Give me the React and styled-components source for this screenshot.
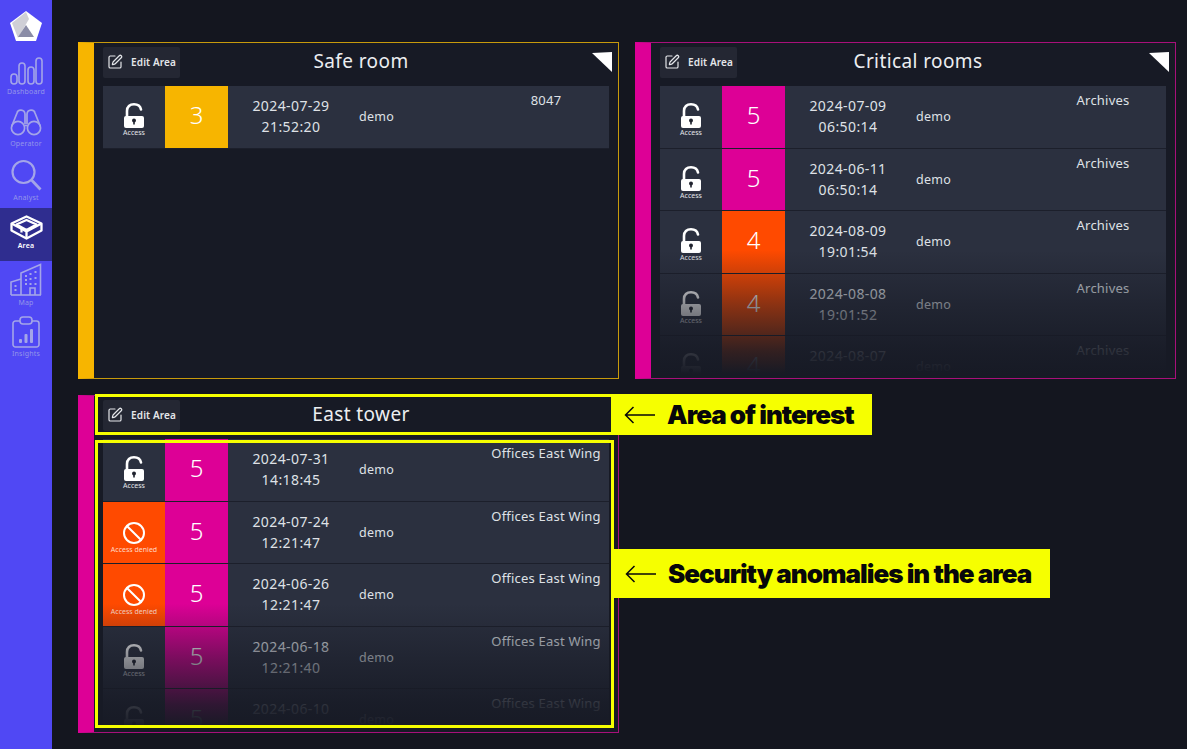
import React from "react";
import styled, { createGlobalStyle } from "styled-components";
import { SquarePen, Ban } from "lucide-react";

const GlobalStyle = createGlobalStyle`
  html, body {
    margin: 0;
    padding: 0;
    background: #14161f;
    font-family: "Noto Sans", "Liberation Sans", sans-serif;
  }
  * {
    box-sizing: border-box;
  }
`;

const Page = styled.div`
  display: flex;
  width: 1187px;
  height: 749px;
  overflow: hidden;
  background: #14161f;
`;

const Sidebar = styled.nav`
  width: 52px;
  flex-shrink: 0;
  background: #5048f4;
  display: flex;
  flex-direction: column;
`;

const LogoBox = styled.div`
  height: 49px;
  display: flex;
  align-items: flex-start;
  justify-content: center;
  padding-top: 10px;
`;

const NavItem = styled.div`
  height: 53px;
  display: flex;
  flex-direction: column;
  align-items: center;
  background: ${(p) => (p.$active ? "#2f2d8f" : "transparent")};
  color: ${(p) => (p.$active ? "#ffffff" : "#a4a5e8")};
`;

const NavIcon = styled.div`
  height: 36px;
  margin-top: ${(p) => p.$top}px;
  display: flex;
  align-items: center;
  justify-content: center;
`;

const NavLabel = styled.span`
  margin-top: ${(p) => p.$gap}px;
  font-size: 7px;
  line-height: 8px;
  letter-spacing: 0.2px;
  font-weight: ${(p) => (p.$active ? 600 : 400)};
  color: ${(p) => (p.$active ? "#ffffff" : "#9496ea")};
`;

const Main = styled.main`
  flex: 1;
  padding: 42px 0 0 26px;
  display: grid;
  grid-template-columns: 541px 541px;
  grid-template-rows: 337px 338px;
  gap: 16px;
`;

const Panel = styled.section`
  position: relative;
  display: flex;
  flex-direction: column;
  padding: 3px 9px 4px 9px;
  background: #171a25;
  border: 1px solid ${(p) => p.$edge};
  border-left: 16px solid ${(p) => p.$accent};
`;

const PanelHeader = styled.header`
  display: grid;
  grid-template-columns: 77px 1fr 67px;
  align-items: center;
  height: 32px;
  margin-bottom: 8px;
  flex-shrink: 0;
`;

const EditButton = styled.div`
  height: 31px;
  display: flex;
  align-items: center;
  justify-content: center;
  gap: 8px;
  background: #242733;
  border-radius: 2px;
  color: #e4e6ea;
  font-size: 10px;
  font-weight: 600;
  letter-spacing: 0.1px;
`;

const PanelTitle = styled.h2`
  margin: 0 0 2px;
  text-align: center;
  color: #eceef1;
  font-size: 19px;
  line-height: 24px;
  font-weight: 400;
  letter-spacing: 0.4px;
`;

const Corner = styled.svg`
  justify-self: end;
  margin-right: -4px;
`;

const RowList = styled.div`
  position: relative;
  flex: 1;
  overflow: hidden;
`;

const Fade = styled.div`
  position: absolute;
  inset: 0;
  background: linear-gradient(
    to bottom,
    rgba(23, 26, 37, 0) 57%,
    rgba(23, 26, 37, 0.5) 76%,
    rgba(23, 26, 37, 0.88) 92%,
    #171a25 100%
  );
`;

const Row = styled.div`
  display: grid;
  grid-template-columns: 62px 63px 126px 129px 126px;
  height: 62.5px;
  background: #2b303f;
  border-bottom: 1px solid #1c1f2b;
  color: #dfe1e6;
`;

const AccessCell = styled.div`
  display: flex;
  flex-direction: column;
  align-items: center;
  padding-top: ${(p) => (p.$denied ? 19 : 17)}px;
  background: ${(p) => (p.$denied ? "#ff4a00" : "transparent")};
  color: #ffffff;
`;

const AccessLabel = styled.span`
  font-size: 7px;
  line-height: 9px;
  color: ${(p) => (p.$denied ? "#ffd9c7" : "#e4e6ea")};
`;

const LevelCell = styled.div`
  display: flex;
  align-items: center;
  justify-content: center;
  padding-bottom: 4px;
  background: ${(p) => p.$color};
  color: #ffffff;
  font-size: 24px;
  font-weight: 300;
`;

const DateCell = styled.div`
  display: flex;
  flex-direction: column;
  align-items: center;
  justify-content: center;
  padding-bottom: 1px;
  font-size: 14px;
  line-height: 21px;
  letter-spacing: 0.4px;
`;

const UserCell = styled.div`
  display: flex;
  align-items: center;
  padding-left: 5px;
  font-size: 12.5px;
  letter-spacing: 0.3px;
`;

const LocationCell = styled.div`
  padding-top: 4px;
  text-align: center;
  font-size: 13px;
  line-height: 20px;
  letter-spacing: 0.2px;
  white-space: nowrap;
`;

const Frame = styled.div`
  position: absolute;
  left: 1px;
  width: 519px;
  top: ${(p) => p.$top}px;
  height: ${(p) => p.$height}px;
  border: 3px solid #f6ff00;
  pointer-events: none;
`;

const Callout = styled.div`
  position: absolute;
  left: ${(p) => p.$left}px;
  top: ${(p) => p.$top}px;
  height: ${(p) => p.$height}px;
  width: ${(p) => p.$width}px;
  display: flex;
  align-items: center;
  gap: 12px;
  padding-left: 12px;
  background: #f6ff00;
  color: #07070a;
  font-family: Inter, "Liberation Sans", sans-serif;
  font-size: 26px;
  font-weight: 900;
  letter-spacing: -1px;
  white-space: nowrap;
`;

const LockOpen = () => (
  <svg width="24" height="25" viewBox="0 0 24 25">
    <path
      d="M5 14V8C5 3.600 7.800 1.300 12 1.300c3.800 0 6.300 1.800 7 5.200"
      fill="none"
      stroke="currentColor"
      strokeWidth="2.600"
      strokeLinecap="round"
    />
    <rect x="2" y="13" width="20" height="12" rx="2" fill="currentColor" />
    <circle cx="12" cy="17.500" r="2" fill="#20232f" />
    <rect x="11.200" y="17.500" width="1.600" height="4" fill="#20232f" />
  </svg>
);

const Logo = () => (
  <svg width="34" height="33" viewBox="0 0 34 33">
    <polygon points="17,1 33,13 27,31 7,31 1,13" fill="#ffffff" />
    <polygon points="3,13 17,2 20,9 9,28" fill="#cfcfd6" />
    <polygon points="17,15 9,27 25,27" fill="#8a8ca6" />
  </svg>
);

const DashboardIcon = () => (
  <svg width="33" height="28" viewBox="0 0 33 28" fill="none" stroke="currentColor" strokeWidth="1.600">
    <rect x="1" y="17" width="6" height="10" rx="3" />
    <rect x="9" y="6" width="6" height="21" rx="3" />
    <rect x="18" y="10" width="6" height="17" rx="3" />
    <rect x="26" y="1" width="6" height="26" rx="3" />
  </svg>
);

const BinocularsIcon = () => (
  <svg width="32" height="28" viewBox="0 0 32 28" fill="none" stroke="currentColor" strokeWidth="1.700">
    <circle cx="8" cy="20" r="6.600" />
    <circle cx="24" cy="20" r="6.600" />
    <path d="M1.600 18.500 7 5c.8-4 7.500-4 8 1v10" />
    <path d="M30.400 18.500 25 5c-.8-4-7.500-4-8 1v10" />
    <path d="M14.500 17.500h3" />
  </svg>
);

const SearchIcon = () => (
  <svg width="32" height="32" viewBox="0 0 32 32" fill="none" stroke="currentColor" strokeWidth="2.200">
    <circle cx="13.500" cy="13" r="11" />
    <path d="M21.500 21 30.500 30.500" strokeWidth="2.800" />
  </svg>
);

const AreaIcon = () => (
  <svg width="33" height="25" viewBox="0 0 33 25" fill="none" stroke="currentColor" strokeWidth="2.300" strokeLinejoin="round">
    <path d="M16.500 1.500 31.500 8.500V15.500L16.500 23.500 1.500 15.500V8.500Z" />
    <path d="M16.500 5 26.500 9.500 16.500 15 6.500 9.500Z" />
    <path d="M1.500 8.500 16.500 16.500 31.500 8.500M16.500 16.500v7" />
    <path d="M11.500 12.500v5" />
  </svg>
);

const MapIcon = () => (
  <svg width="32" height="33" viewBox="0 0 32 33" fill="none" stroke="currentColor" strokeWidth="1.600">
    <path d="M11 32V10L30.500 1.500V32" />
    <path d="M1 32V19L11 16" />
    <path d="M1 32h30" />
    <path d="M20 32v-7h5v7" />
    <path
      d="M15 13h2M19.500 11h2M24.500 9h2M15 17h2M19.500 16h2M24.500 15h2M15 21h2M19.500 21h2M24.500 21h2M4.500 23h2M4.500 27h2"
      strokeWidth="1.800"
    />
  </svg>
);

const InsightsIcon = () => (
  <svg width="28" height="32" viewBox="0 0 28 32" fill="none" stroke="currentColor" strokeWidth="1.600">
    <path d="M8 5H3.500A2.500 2.500 0 0 0 1 7.500v21A2.500 2.500 0 0 0 3.500 31h21a2.500 2.500 0 0 0 2.500-2.500v-21A2.500 2.500 0 0 0 24.500 5H20" />
    <rect x="8" y="1" width="12" height="7" rx="3" />
    <rect x="7" y="23" width="3" height="4" rx="1" fill="currentColor" stroke="none" />
    <rect x="12.500" y="18" width="3" height="9" rx="1" fill="currentColor" stroke="none" />
    <rect x="18" y="13" width="3" height="14" rx="1" fill="currentColor" stroke="none" />
  </svg>
);

const ArrowLeft = () => (
  <svg width="31" height="18" viewBox="0 0 31 18" fill="none" stroke="#07070a" strokeWidth="1.500">
    <path d="M31 9H1.500M9.500 1 1.500 9l8 8" />
  </svg>
);

// icon and label offsets differ a little per item in the source design
const navItems = [
  { label: "Dashboard", icon: <DashboardIcon />, top: 4, gap: -1 },
  { label: "Operator", icon: <BinocularsIcon />, top: 2, gap: 0 },
  { label: "Analyst", icon: <SearchIcon />, top: 2, gap: 1 },
  { label: "Area", icon: <AreaIcon />, top: 1, gap: -3, active: true },
  { label: "Map", icon: <MapIcon />, top: 0, gap: 2 },
  { label: "Insights", icon: <InsightsIcon />, top: 0, gap: 0 },
];

const PINK = "#dd0096";
const ORANGE = "#ff4a00";
const AMBER = "#f7b500";

const safeRows = [{ level: 3, color: AMBER, date: "2024-07-29", time: "21:52:20", place: "8047" }];

const criticalRows = [
  { level: 5, color: PINK, date: "2024-07-09", time: "06:50:14", place: "Archives" },
  { level: 5, color: PINK, date: "2024-06-11", time: "06:50:14", place: "Archives" },
  { level: 4, color: ORANGE, date: "2024-08-09", time: "19:01:54", place: "Archives" },
  { level: 4, color: ORANGE, date: "2024-08-08", time: "19:01:52", place: "Archives" },
  { level: 4, color: ORANGE, date: "2024-08-07", time: "19:01:50", place: "Archives" },
];

const eastRows = [
  { level: 5, color: PINK, date: "2024-07-31", time: "14:18:45", place: "Offices East Wing" },
  { level: 5, color: PINK, date: "2024-07-24", time: "12:21:47", place: "Offices East Wing", denied: true },
  { level: 5, color: PINK, date: "2024-06-26", time: "12:21:47", place: "Offices East Wing", denied: true },
  { level: 5, color: PINK, date: "2024-06-18", time: "12:21:40", place: "Offices East Wing" },
  { level: 5, color: PINK, date: "2024-06-10", time: "12:21:38", place: "Offices East Wing" },
];

const AlertRow = ({ row }) => (
  <Row>
    <AccessCell $denied={row.denied}>
      {row.denied ? <Ban size={24} strokeWidth={2} /> : <LockOpen />}
      <AccessLabel $denied={row.denied}>{row.denied ? "Access denied" : "Access"}</AccessLabel>
    </AccessCell>
    <LevelCell $color={row.color}>{row.level}</LevelCell>
    <DateCell>
      <span>{row.date}</span>
      <span>{row.time}</span>
    </DateCell>
    <UserCell>demo</UserCell>
    <LocationCell>{row.place}</LocationCell>
  </Row>
);

const AreaPanel = ({ title, accent, edge, rows, corner, children }) => (
  <Panel $accent={accent} $edge={edge}>
    <PanelHeader>
      <EditButton>
        <SquarePen size={16} strokeWidth={1.8} />
        Edit Area
      </EditButton>
      <PanelTitle>{title}</PanelTitle>
      {corner && (
        <Corner width="21" height="20" viewBox="0 0 21 20">
          <polygon points="0,1 20,0 20,20" fill="#ffffff" />
        </Corner>
      )}
    </PanelHeader>
    <RowList>
      {rows.map((row) => (
        <AlertRow key={row.date} row={row} />
      ))}
      <Fade />
    </RowList>
    {children}
  </Panel>
);

export default function App() {
  return (
    <>
      <GlobalStyle />
      <Page>
        <Sidebar>
          <LogoBox>
            <Logo />
          </LogoBox>
          {navItems.map((item) => (
            <NavItem key={item.label} $active={item.active}>
              <NavIcon $top={item.top}>{item.icon}</NavIcon>
              <NavLabel $active={item.active} $gap={item.gap}>
                {item.label}
              </NavLabel>
            </NavItem>
          ))}
        </Sidebar>
        <Main>
          <AreaPanel title="Safe room" accent={AMBER} edge="#c79a0c" rows={safeRows} corner />
          <AreaPanel title="Critical rooms" accent={PINK} edge="#a8107a" rows={criticalRows} corner />
          <AreaPanel title="East tower" accent={PINK} edge="#a8107a" rows={eastRows}>
            <Frame $top={-2} $height={41} />
            <Frame $top={44} $height={288} />
            <Callout $left={518} $top={-2} $height={41} $width={260}>
              <ArrowLeft />
              Area of interest
            </Callout>
            <Callout $left={519} $top={153} $height={49} $width={437}>
              <ArrowLeft />
              Security anomalies in the area
            </Callout>
          </AreaPanel>
        </Main>
      </Page>
    </>
  );
}
